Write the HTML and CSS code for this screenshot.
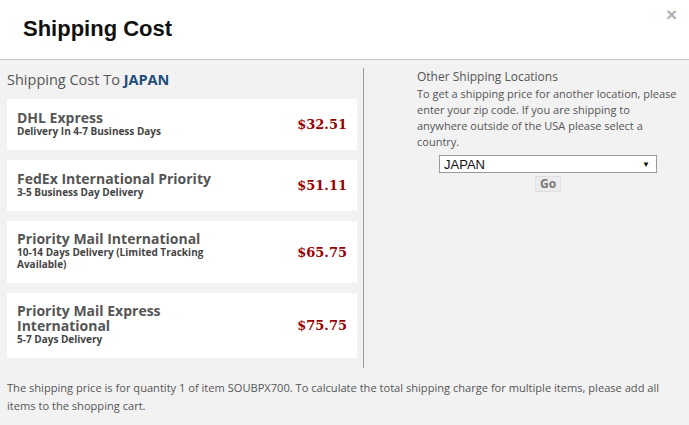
FILE: index.html
```html
<!DOCTYPE html>
<html lang="en">
  <head>
    <meta charset="UTF-8" />
    <meta name="viewport" content="width=device-width, initial-scale=1.0" />
    <title>Shipping Cost</title>
    <link rel="stylesheet" href="styles.css">
  </head>
  <body>
    <div id="modal">
      <div id="modal-header">
        <h1>Shipping Cost</h1>
        <span class="close-button">&times;</span>
      </div>
      <div id="modal-body">
        <div id="rates-column">
          <h2>Shipping Cost To <span class="country">JAPAN</span></h2>
          <div class="rate-item">
            <div class="rate-info">
              <div class="rate-name">DHL Express</div>
              <div class="rate-desc">Delivery In 4-7 Business Days</div>
            </div>
            <div class="rate-price">$32.51</div>
          </div>
          <div class="rate-item">
            <div class="rate-info">
              <div class="rate-name">FedEx International Priority</div>
              <div class="rate-desc">3-5 Business Day Delivery</div>
            </div>
            <div class="rate-price">$51.11</div>
          </div>
          <div class="rate-item">
            <div class="rate-info">
              <div class="rate-name">Priority Mail International</div>
              <div class="rate-desc">10-14 Days Delivery (Limited Tracking Available)</div>
            </div>
            <div class="rate-price">$65.75</div>
          </div>
          <div class="rate-item">
            <div class="rate-info">
              <div class="rate-name">Priority Mail Express International</div>
              <div class="rate-desc">5-7 Days Delivery</div>
            </div>
            <div class="rate-price">$75.75</div>
          </div>
        </div>
        <div id="location-column">
          <div id="location-box">
            <h3>Other Shipping Locations</h3>
            <p>To get a shipping price for another location, please enter your zip code. If you are shipping to anywhere outside of the USA please select a country.</p>
            <div class="location-form">
              <div class="country-select">
                <span>JAPAN</span>
                <span class="arrow">&#9660;</span>
              </div>
              <button class="go-button">Go</button>
            </div>
          </div>
        </div>
      </div>
      <div id="modal-footer">
        The shipping price is for quantity 1 of item SOUBPX700. To calculate the total shipping charge for multiple items, please add all items to the shopping cart.
      </div>
    </div>
  </body>
</html>
```

FILE: styles.css
```css
body {
  margin: 0;
  font-family: "Open Sans", sans-serif;
  background-color: #f2f2f2;
  color: #555;
}

#modal {
  width: 689px;
  height: 425px;
  display: flex;
  flex-direction: column;
}

#modal-header {
  height: 59px;
  background-color: white;
  border-bottom: 1px solid #c4c4c4;
  display: flex;
  justify-content: space-between;
  align-items: flex-start;
}

#modal-header h1 {
  margin: 17px 0 0 23px;
  font-family: "Liberation Sans", Arial, sans-serif;
  font-size: 22px;
  font-weight: bold;
  color: #111;
  line-height: 24px;
}

.close-button {
  margin: 4px 12px 0 0;
  font-family: "Liberation Sans", Arial, sans-serif;
  font-size: 19px;
  font-weight: bold;
  color: #b0b0b0;
}

#modal-body {
  display: flex;
  margin-top: 8px;
}

#rates-column {
  width: 356px;
  padding-left: 7px;
  border-right: 1px solid #9a9a9a;
  padding-bottom: 10px;
}

#rates-column h2 {
  margin: 2px 0 9px 0;
  font-size: 14.5px;
  font-weight: normal;
  line-height: 20px;
  color: #555;
}

.country {
  font-weight: bold;
  color: #1f4d7c;
}

.rate-item {
  width: 330px;
  min-height: 28px;
  background-color: white;
  padding: 10px 10px 13px;
  margin-bottom: 10px;
  display: flex;
  justify-content: space-between;
  align-items: center;
}

.rate-item:last-child {
  margin-bottom: 0;
}

.rate-info {
  width: 196px;
}

.rate-name {
  font-size: 14px;
  font-weight: bold;
  line-height: 15px;
  color: #555;
}

.rate-desc {
  font-size: 10px;
  font-weight: bold;
  line-height: 12px;
  color: #444;
}

.rate-price {
  font-family: "DejaVu Serif", serif;
  font-size: 13px;
  font-weight: bold;
  color: #990000;
  margin-top: 3px;
}

#location-column {
  flex-grow: 1;
}

#location-box {
  width: 262px;
  margin-left: 53px;
}

#location-box h3 {
  margin: 0;
  font-size: 12px;
  font-weight: normal;
  line-height: 18px;
  color: #555;
}

#location-box p {
  margin: 0;
  font-size: 11px;
  line-height: 16px;
  color: #555;
}

.location-form {
  display: flex;
  flex-direction: column;
  align-items: center;
  margin-top: 5px;
}

.country-select {
  width: 206px;
  height: 16px;
  padding: 0 6px 0 4px;
  background-color: white;
  border: 1px solid #999;
  display: flex;
  justify-content: space-between;
  align-items: center;
  font-family: "Liberation Sans", Arial, sans-serif;
  font-size: 13px;
  color: #111;
}

.arrow {
  font-size: 8px;
}

.go-button {
  margin-top: 3px;
  padding: 0 4px;
  height: 16px;
  background-color: #ececec;
  border: 1px solid #ddd;
  border-radius: 2px;
  font-family: "Open Sans", sans-serif;
  font-size: 12px;
  font-weight: bold;
  line-height: 14px;
  color: #777;
}

#modal-footer {
  padding: 11px 7px 0 7px;
  font-size: 11.1px;
  line-height: 18px;
  color: #555;
}
```
